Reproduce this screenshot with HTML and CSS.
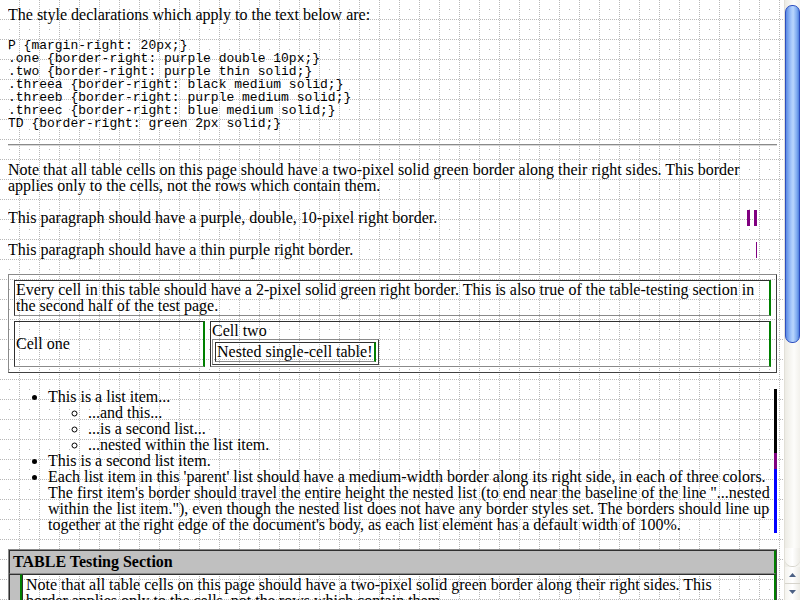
FILE: index.html
```
<!DOCTYPE html>
<html>
<head>
<meta charset="utf-8">
<title>border-right</title>
<link rel="stylesheet" href="styles.css">
</head>
<body>
<p class="intro">The style declarations which apply to the text below are:</p>
<pre>P {margin-right: 20px;}
.one {border-right: purple double 10px;}
.two {border-right: purple thin solid;}
.threea {border-right: black medium solid;}
.threeb {border-right: purple medium solid;}
.threec {border-right: blue medium solid;}
TD {border-right: green 2px solid;}</pre>
<hr>
<p class="note">Note that all table cells on this page should have a two-pixel solid green border along their right sides. This border applies only to the cells, not the rows which contain them.</p>
<p class="one">This paragraph should have a purple, double, 10-pixel right border.</p>
<p class="two">This paragraph should have a thin purple right border.</p>
<table class="t1">
<tr><td colspan="2" class="wide">Every cell in this table should have a 2-pixel solid green right border. This is also true of the table-testing section in the second half of the test page.</td></tr>
<tr><td class="c1">Cell one</td><td class="c2">Cell two<table class="nested"><tr><td>Nested single-cell table!</td></tr></table></td></tr>
</table>
<ul class="parent">
<li class="threea">This is a list item...
<ul class="child">
<li>...and this...</li>
<li>...is a second list...</li>
<li>...nested within the list item.</li>
</ul>
</li>
<li class="threeb">This is a second list item.</li>
<li class="threec">Each list item in this 'parent' list should have a medium-width border along its right side, in each of three colors. The first item's border should travel the entire height the nested list (to end near the baseline of the line "...nested within the list item."), even though the nested list does not have any border styles set. The borders should line up together at the right edge of the document's body, as each list element has a default width of 100%.</li>
</ul>
<table class="t2">
<tr><td colspan="2" class="head"><strong>TABLE Testing Section</strong></td></tr>
<tr><td class="side">&nbsp;</td><td class="main"><p class="cellp">Note that all table cells on this page should have a two-pixel solid green border along their right sides. This border applies only to the cells, not the rows which contain them.</p><p class="cellp">This paragraph should have a purple, double, 10-pixel right border.</p></td></tr>
</table>

<div class="scrollbar">
  <div class="thumb"></div>
  <div class="track-end"></div>
  <div class="sb-btn up"><svg width="7" height="4" viewBox="0 0 7 4"><path d="M3.5 0L7 4H0z" fill="#4d6185"/></svg></div>
  <div class="sb-btn down"><svg width="7" height="4" viewBox="0 0 7 4"><path d="M0 0H7L3.5 4z" fill="#4d6185"/></svg></div>
</div>
</body>
</html>
```
FILE: styles.css
```
html {
  overflow: hidden;
  background: #fff url("data:image/svg+xml,%3Csvg xmlns='http://www.w3.org/2000/svg' width='20' height='20' shape-rendering='crispEdges'%3E%3Cg stroke='%23b8b8b8' stroke-dasharray='1 1'%3E%3Cpath d='M19.5 0V20M0 19.5H20'/%3E%3C/g%3E%3Crect x='9' y='9' width='1' height='1' fill='%23b8b8b8'/%3E%3C/svg%3E") 0 0 repeat;
}

body {
  margin: 8px 23px 8px 8px;
  font-family: "Liberation Serif", "Times New Roman", serif;
  font-size: 16px;
  line-height: 16px;
  color: #000;
}

p {
  margin: 16px 20px 16px 0;
}

p.intro {
  margin-top: -1px;
}

pre {
  margin: 14px 0 0;
  font-family: "Liberation Mono", "Courier New", monospace;
  font-size: 13px;
  line-height: 13px;
}

hr {
  margin: 14px 0 16px;
  height: 0;
  border: 0;
  border-top: 1px solid #8a8a8a;
  border-bottom: 1px solid #d8d8d8;
}

.one {
  border-right: 10px double purple;
}

.two {
  border-right: 1px solid purple;
}

table {
  border-collapse: separate;
  border-style: solid;
  border-width: 1px;
  border-color: #8a8a8a #404040 #404040 #8a8a8a;
}

td {
  border-style: solid;
  border-width: 1px 2px 1px 1px;
  border-color: #303030 green #8a8a8a #303030;
  padding: 1px;
  vertical-align: middle;
}

.t1 {
  width: 100%;
  border-spacing: 5px;
  margin: 0;
}

.t1 .c1 {
  width: 186px;
}

.t1 .c2 {
  vertical-align: top;
}

.nested {
  border-spacing: 2px;
  margin: 0;
}

ul.parent {
  margin: 16px 0 16px;
  padding-left: 40px;
  list-style: disc;
}

ul.child {
  margin: 0;
  padding-left: 40px;
  list-style: circle;
}

.threea {
  border-right: 3px solid black;
}

.threeb {
  border-right: 3px solid purple;
}

.threec {
  border-right: 3px solid blue;
}

.t2 {
  width: 100%;
  border-spacing: 0;
  margin: 0;
}

.t2 td {
  padding: 3px;
  vertical-align: top;
}

.t2 .head {
  background: silver;
}

.t2 .side {
  background: silver;
  width: 4px;
}

.t2 .cellp {
  margin: -1px 20px 16px 0;
}

.scrollbar {
  position: fixed;
  top: 0;
  right: 0;
  width: 16px;
  height: 600px;
  box-sizing: border-box;
  background: linear-gradient(to right, #ecebe4, #fdfdfb 60%, #f2f1ec);
  border-left: 1px solid #e2e0d8;
}

.thumb {
  position: absolute;
  top: 5px;
  left: 0;
  width: 15px;
  height: 338px;
  box-sizing: border-box;
  border: 1px solid #2e4fbf;
  border-radius: 7px;
  background: linear-gradient(to right, #5a8ae4, #a6c8fb 40%, #b9d6fd 55%, #7aa7f0 85%, #4f7fdc);
}

.track-end {
  position: absolute;
  top: 548px;
  left: 0;
  width: 15px;
  height: 18px;
  border-radius: 0 0 7px 7px;
  background: linear-gradient(to right, #f4f3ee, #ffffff 50%, #ecebe5);
  box-shadow: 0 1px 0 #d6d4cc;
}

.sb-btn {
  position: absolute;
  left: 0;
  width: 15px;
  height: 16px;
  display: flex;
  align-items: center;
  justify-content: center;
  background: linear-gradient(to right, #f4f3ee, #ffffff 50%, #ecebe5);
}

.sb-btn svg {
  display: block;
}

.sb-btn.up {
  top: 567px;
  border-bottom: 1px solid #d6d4cc;
}

.sb-btn.down {
  top: 584px;
}
```
